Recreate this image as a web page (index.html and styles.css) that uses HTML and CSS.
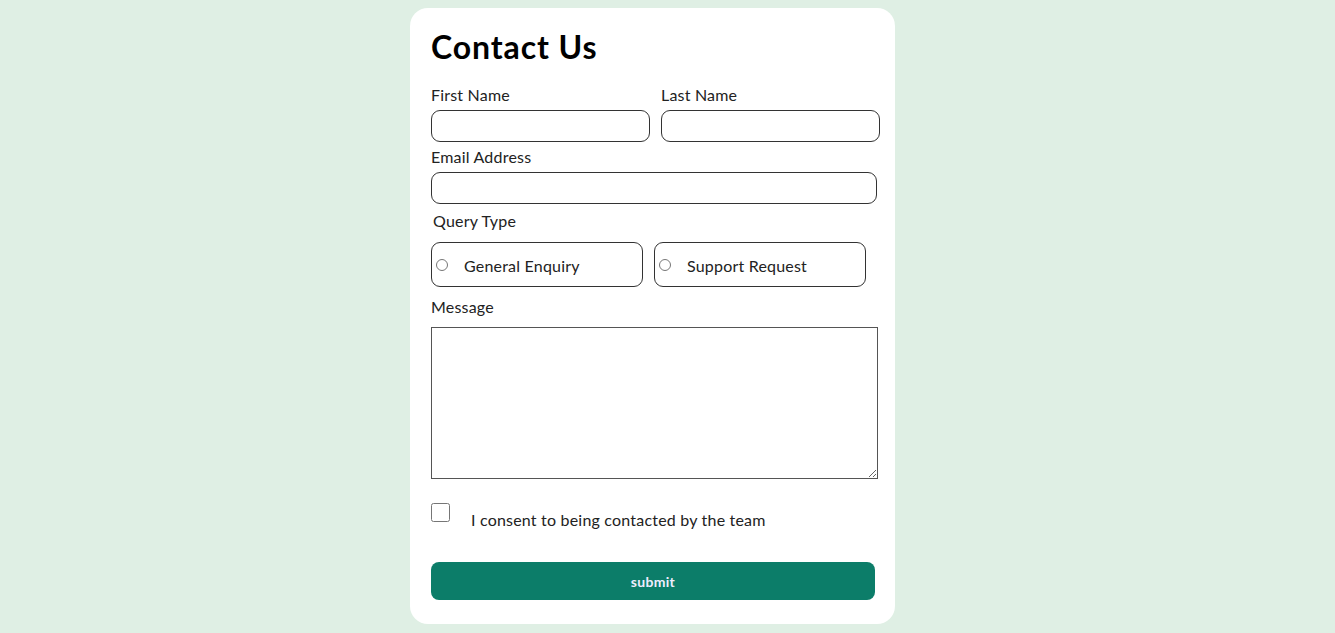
FILE: index.html
```html
<!DOCTYPE html>
<html lang="en">
<head>
  <meta charset="UTF-8" />
  <meta name="viewport" content="width=device-width, initial-scale=1.0" />
  <title>Contact Us</title>
  <link rel="stylesheet" href="styles.css">
</head>
<body>
  <main class="card">
    <h1>Contact Us</h1>
    <form id="contact">
      <div class="row two">
        <div class="field">
          <label for="first">First Name</label>
          <input type="text" id="first">
        </div>
        <div class="field">
          <label for="last">Last Name</label>
          <input type="text" id="last">
        </div>
      </div>

      <div class="field email">
        <label for="email">Email Address</label>
        <input type="email" id="email">
      </div>

      <div class="query">
        <span class="query-label">Query Type</span>
        <div class="options">
          <label class="option"><input type="radio" name="query"><span>General Enquiry</span></label>
          <label class="option"><input type="radio" name="query"><span>Support Request</span></label>
        </div>
      </div>

      <div class="field message">
        <label for="msg">Message</label>
        <textarea id="msg"></textarea>
      </div>

      <label class="consent"><input type="checkbox"><span>I consent to being contacted by the team</span></label>

      <button type="submit">submit</button>
    </form>
  </main>
</body>
</html>
```

FILE: styles.css
```css
body {
  font-family: Lato, "Noto Sans", sans-serif;
  background-color: #dfefe4;
  margin: 0;
  padding: 8px 30px 9px 0;
  display: flex;
  justify-content: center;
  color: #222;
}
.card {
  width: 485px;
  box-sizing: border-box;
  background-color: #fff;
  border-radius: 18px;
  padding: 22px 15px 24px 21px;
}
h1 {
  margin: 0;
  font-size: 32px;
  line-height: 34px;
  font-weight: bold;
  letter-spacing: 0.9px;
  color: #000;
}
form {
  display: flex;
  flex-direction: column;
}
.row.two {
  display: flex;
  gap: 11px;
  margin-top: 22px;
}
.row.two .field {
  width: 219px;
}
.field {
  display: flex;
  flex-direction: column;
}
.field label,
.query-label {
  font-size: 16px;
  line-height: 18px;
  margin-bottom: 6px;
  letter-spacing: 0.2px;
}
input[type="text"],
input[type="email"] {
  height: 32px;
  box-sizing: border-box;
  border: 1px solid #333;
  border-radius: 9px;
  padding: 0 10px;
  font: inherit;
}
.email {
  margin-top: 6px;
  width: 446px;
}
.query {
  margin-top: 8px;
}
.query-label {
  display: block;
  margin-left: 2px;
  margin-bottom: 12px;
}
.options {
  display: flex;
  gap: 11px;
}
.option {
  width: 212px;
  height: 45px;
  box-sizing: border-box;
  border: 1px solid #333;
  border-radius: 9px;
  display: flex;
  align-items: center;
  font-size: 16px;
  letter-spacing: 0.2px;
}
.option input {
  margin: 0 0 0 4px;
  width: 12px;
  height: 12px;
}
.option span {
  margin-left: 16px;
  padding-top: 2px;
}
.message {
  margin-top: 11px;
}
.message label {
  margin-bottom: 11px;
}
textarea {
  width: 447px;
  height: 152px;
  box-sizing: border-box;
  border: 1px solid #555;
  border-radius: 0;
  resize: both;
  font: inherit;
}
.consent {
  display: flex;
  align-items: flex-start;
  margin-top: 24px;
  font-size: 16px;
  letter-spacing: 0.2px;
}
.consent input {
  margin: 0;
  width: 19px;
  height: 19px;
}
.consent span {
  margin-left: 21px;
  margin-top: 7px;
}
button {
  margin-top: 33px;
  width: 444px;
  height: 38px;
  border: none;
  border-radius: 8px;
  background-color: #0c7d69;
  color: #eef;
  font-family: inherit;
  font-size: 14px;
  font-weight: bold;
  letter-spacing: 0.3px;
  cursor: pointer;
}
```
